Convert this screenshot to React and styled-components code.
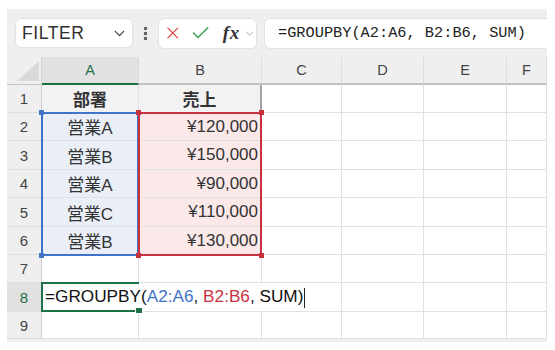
import React from 'react';
import styled, {createGlobalStyle} from "styled-components";
import {X, Check, ChevronDown, EllipsisVertical} from "lucide-react";

const GlobalStyle = createGlobalStyle`
  body {
    margin: 0;
    background: #ffffff;
    font-family: "Liberation Sans", "Noto Sans CJK JP", sans-serif;
  }
`

const Frame = styled.div`
  margin: 9px 0 0 7px;
  width: 540px;
  background: #efefef;
  padding-bottom: 3px;
`

const Toolbar = styled.div`
  height: 48px;
  display: flex;
  align-items: center;
  padding-left: 8px;
  box-sizing: border-box;
`

const NameBox = styled.div`
  width: 118px;
  height: 30px;
  box-sizing: border-box;
  background: #ffffff;
  border: 1px solid #e2e2e2;
  border-radius: 6px;
  display: flex;
  align-items: center;
  justify-content: space-between;
  padding: 0 4px 0 6px;
  font-size: 17.5px;
  color: #2f2f2f;
  letter-spacing: 0.6px;
`

const Dots = styled.div`
  width: 25px;
  display: flex;
  justify-content: center;
  color: #555;
`

const IconBox = styled.div`
  width: 99px;
  height: 31px;
  box-sizing: border-box;
  background: #ffffff;
  border: 1px solid #e2e2e2;
  border-radius: 6px;
  display: flex;
  align-items: center;
  padding-left: 4px;
  gap: 3px;
`

const Fx = styled.span`
  font-family: "Liberation Serif", serif;
  font-style: italic;
  font-weight: bold;
  font-size: 19px;
  color: #333;
  margin-left: 9px;
  letter-spacing: 0.5px;
`

const FormulaBox = styled.div`
  flex: 1;
  margin-left: 7px;
  height: 31px;
  box-sizing: border-box;
  background: #ffffff;
  border: 1px solid #e2e2e2;
  border-right: none;
  border-radius: 6px 0 0 6px;
  display: flex;
  align-items: center;
  padding-left: 13px;
  font-family: "Liberation Mono", "DejaVu Sans Mono", monospace;
  font-size: 15.3px;
  color: #222;
`

const Sheet = styled.div`
  display: grid;
  grid-template-columns: 35px 97px 123px 80px 82px 83px 40px;
  grid-template-rows: 28px 28px 28px 29px 28px 29px 28px 28px 29px 27px;
  background: #ffffff;
`

const Corner = styled.div`
  grid-row: 1;
  grid-column: 1;
  background: #efefef;
  border-right: 1px solid #d4d4d4;
  border-bottom: 1px solid #c4c4c4;
  position: relative;

  &::after {
    content: "";
    position: absolute;
    right: 2px;
    bottom: 3px;
    width: 22px;
    height: 20px;
    background: #d9d9d9;
    clip-path: polygon(100% 0, 100% 100%, 0 100%);
  }
`

const ColHead = styled.div`
  grid-row: 1;
  grid-column: ${p => p.$c};
  background: ${p => p.$active ? '#e1e1e1' : '#efefef'};
  color: ${p => p.$active ? '#1e7145' : '#444'};
  border-right: 1px solid #dcdcdc;
  border-bottom: ${p => p.$active ? '2px solid #1e7145' : '2px solid #c2c2c2'};
  display: flex;
  align-items: center;
  justify-content: center;
  font-size: 14.5px;
`

const RowHead = styled.div`
  grid-row: ${p => p.$r};
  grid-column: 1;
  background: ${p => p.$active ? '#e1e1e1' : '#efefef'};
  color: ${p => p.$active ? '#1e7145' : '#444'};
  border-right: 1px solid #cfcfcf;
  border-bottom: 1px solid #dedede;
  display: flex;
  align-items: center;
  justify-content: center;
  font-size: 15px;
`

const Cell = styled.div`
  grid-row: ${p => p.$r};
  grid-column: ${p => p.$c};
  background: ${p => p.$bg || '#ffffff'};
  border-right: ${p => p.$edge || '1px solid #e1e1e1'};
  border-bottom: 1px solid #e1e1e1;
  display: flex;
  align-items: center;
  justify-content: ${p => p.$align || 'flex-start'};
  padding: 0 3px;
  font-size: 17px;
  font-weight: ${p => p.$bold ? 'bold' : 'normal'};
  color: #333;
  white-space: nowrap;
  overflow: visible;
  z-index: ${p => p.$z || 'auto'};
`

const EditText = styled.span`
  font-size: 17.2px;
  color: #111;
  white-space: pre;
`

const RangeBox = styled.div`
  grid-column: ${p => p.$c};
  grid-row: ${p => p.$r};
  border: 2px solid ${p => p.$color};
  margin: -1px 0 -1px -1px;
  position: relative;
  pointer-events: none;
  z-index: ${p => p.$z || 2};
`

const Handle = styled.span`
  position: absolute;
  width: 5px;
  height: 5px;
  background: ${p => p.$color};
  left: ${p => p.$right ? 'auto' : '-4px'};
  right: ${p => p.$right ? '-4px' : 'auto'};
  top: ${p => p.$bottom ? 'auto' : '-4px'};
  bottom: ${p => p.$bottom ? '-4px' : 'auto'};
`

const Selection = styled.div`
  grid-column: 2 / 3;
  grid-row: 9 / 10;
  border: 2px solid #1e7145;
  border-right: none;
  margin: -1px 0 0 -1px;
  position: relative;
  pointer-events: none;
  z-index: 3;
`

const FillHandle = styled.span`
  position: absolute;
  right: -4px;
  bottom: -4px;
  width: 6px;
  height: 5px;
  background: #1e7145;
  border: 1px solid #ffffff;
`

const Ref = styled.span`
  color: ${p => p.$color};
`

const Caret = styled.span`
  display: inline-block;
  width: 1px;
  height: 20px;
  background: #222;
  margin-left: 1px;
  vertical-align: middle;
`

const BLUE = '#3f74c8';
const RED = '#c8323f';

const rows = [
    ['部署', '売上'],
    ['営業A', '¥120,000'],
    ['営業B', '¥150,000'],
    ['営業A', '¥90,000'],
    ['営業C', '¥110,000'],
    ['営業B', '¥130,000'],
];

const cols = ['A', 'B', 'C', 'D', 'E', 'F'];

const EmptyCells = ({r, from}) => cols.slice(from - 2).map((c, k) =>
    <Cell key={c} $r={r} $c={from + k}/>);

const App = () => {
    return <>
        <GlobalStyle/>
        <Frame>
            <Toolbar>
                <NameBox>
                    FILTER
                    <ChevronDown size={17} strokeWidth={1.6} color={'#333'}/>
                </NameBox>
                <Dots><EllipsisVertical size={17} strokeWidth={3}/></Dots>
                <IconBox>
                    <X size={22} strokeWidth={1.6} color={'#e5484d'}/>
                    <Check size={24} strokeWidth={1.6} color={'#3a9d4f'} style={{marginLeft: 4}}/>
                    <Fx>fx</Fx>
                    <ChevronDown size={15} strokeWidth={1.5} color={'#999'}/>
                </IconBox>
                <FormulaBox>=GROUPBY(A2:A6, B2:B6, SUM)</FormulaBox>
            </Toolbar>

            <Sheet>
                <Corner/>
                {cols.map((c, k) => <ColHead key={c} $c={k + 2} $active={c === 'A'}>{c}</ColHead>)}

                {rows.map((r, i) => <React.Fragment key={i}>
                    <RowHead $r={i + 2}>{i + 1}</RowHead>
                    <Cell $r={i + 2} $c={2} $align={'center'} $bold={i === 0}
                          $bg={i === 0 ? '#f2f2f2' : '#e9eef7'}>{r[0]}</Cell>
                    <Cell $r={i + 2} $c={3} $align={i === 0 ? 'center' : 'flex-end'} $bold={i === 0}
                          $bg={i === 0 ? '#f2f2f2' : '#fbe9ea'}
                          $edge={i === 0 ? '2px solid #a3a3a3' : undefined}>{r[1]}</Cell>
                    <EmptyCells r={i + 2} from={4}/>
                </React.Fragment>)}

                <RowHead $r={8}>7</RowHead>
                <EmptyCells r={8} from={2}/>

                <RowHead $r={9} $active>8</RowHead>
                <Cell $r={9} $c={'2 / 5'} $z={1}>
                    <EditText>
                        {'=GROUPBY('}<Ref $color={BLUE}>A2:A6</Ref>{', '}<Ref $color={RED}>B2:B6</Ref>{', SUM)'}<Caret/>
                    </EditText>
                </Cell>
                <EmptyCells r={9} from={5}/>

                <RowHead $r={10}>9</RowHead>
                <EmptyCells r={10} from={2}/>

                <RangeBox $c={'2 / 3'} $r={'3 / 8'} $color={BLUE}>
                    <Handle $color={BLUE}/>
                    <Handle $color={BLUE} $bottom/>
                </RangeBox>
                <RangeBox $c={'3 / 4'} $r={'3 / 8'} $color={RED} $z={3}>
                    <Handle $color={RED}/>
                    <Handle $color={RED} $right/>
                    <Handle $color={RED} $bottom/>
                    <Handle $color={RED} $right $bottom/>
                </RangeBox>
                <Selection><FillHandle/></Selection>
            </Sheet>
        </Frame>
    </>
}

export default App;
